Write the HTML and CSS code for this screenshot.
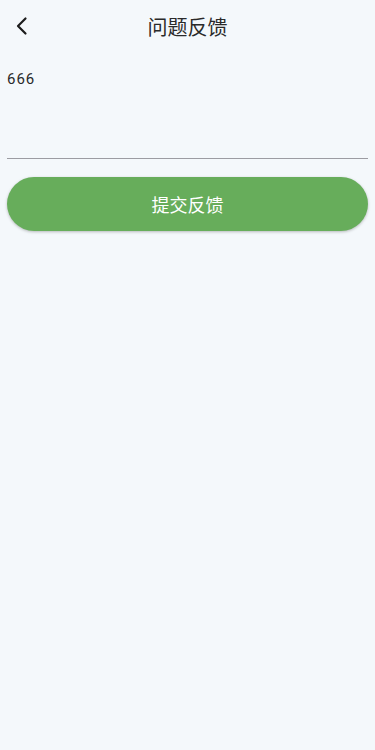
FILE: index.html
```html
<!DOCTYPE html>
<html lang="zh">
<head>
<meta charset="utf-8">
<link rel="stylesheet" href="styles.css">
</head>
<body>
<div class="page">
  <header class="appbar">
    <span class="back">
      <svg width="24" height="24" viewBox="0 0 24 24"><path d="M15.5 4.5 L8 12 L15.5 19.5" fill="none" stroke="#1c1c1c" stroke-width="2.2" stroke-linecap="round" stroke-linejoin="round"/></svg>
    </span>
    <h1 class="title">问题反馈</h1>
  </header>
  <main class="content">
    <div class="field">
      <div class="value">666</div>
    </div>
    <button class="submit">提交反馈</button>
  </main>
</div>
</body>
</html>
```
FILE: styles.css
```css
html, body {
  margin: 0;
  padding: 0;
  background: #f4f8fb;
  font-family: Roboto, "Noto Sans CJK SC", sans-serif;
}
.page {
  width: 375px;
  min-height: 750px;
}
.appbar {
  height: 52px;
  display: flex;
  align-items: center;
  justify-content: center;
  position: relative;
}
.back {
  position: absolute;
  left: 10px;
  top: 14px;
  width: 24px;
  height: 24px;
  display: flex;
}
.title {
  margin: 0;
  font-size: 20px;
  font-weight: 400;
  color: #2a2a2a;
}
.content {
  padding: 0 7px;
}
.field {
  height: 107px;
  border-bottom: 1px solid #9c9ca2;
  box-sizing: border-box;
}
.value {
  padding-top: 17px;
  font-size: 15px;
  letter-spacing: 1px;
  color: #2a2a2a;
  line-height: 20px;
}
.submit {
  margin-top: 18px;
  width: 361px;
  height: 54px;
  border: none;
  border-radius: 27px;
  background: #67ad5b;
  color: #fff;
  font-family: Roboto, "Noto Sans CJK SC", sans-serif;
  font-size: 18px;
  box-shadow: 0 1px 3px rgba(0,0,0,0.25);
  display: block;
}
```
